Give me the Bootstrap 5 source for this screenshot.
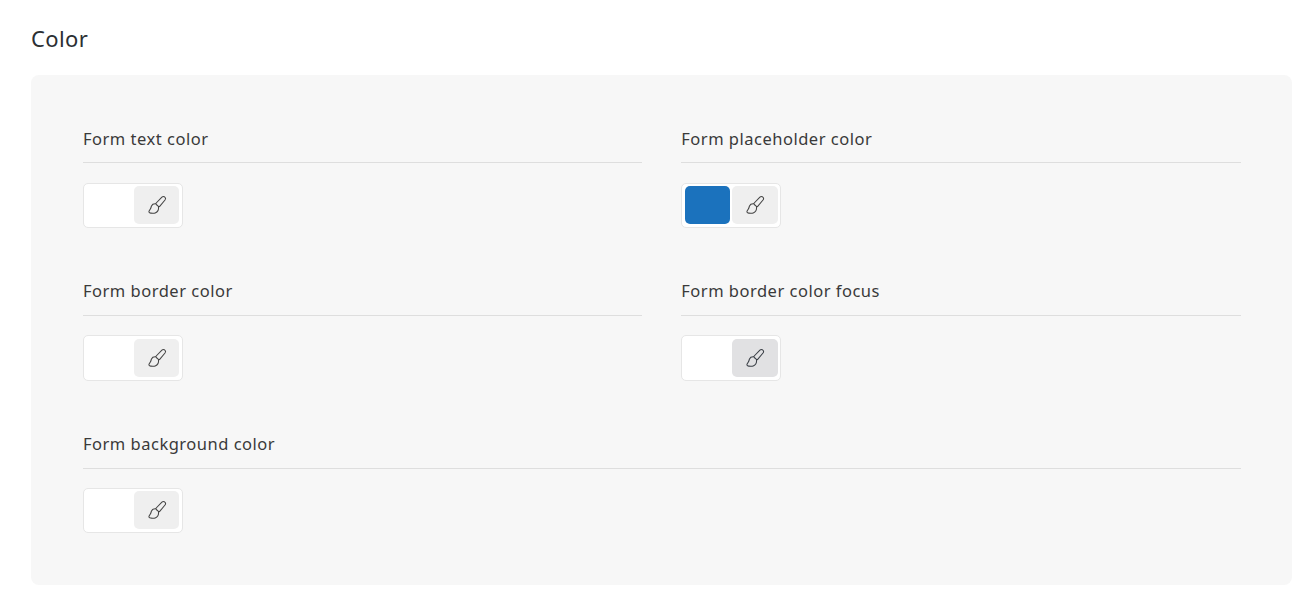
<!DOCTYPE html>
<html lang="en">
<head>
<meta charset="utf-8">
<title>Color</title>
<link href="https://cdn.jsdelivr.net/npm/bootstrap@5.3.0/dist/css/bootstrap.min.css" rel="stylesheet">
<style>
body{background:#fff;font-family:"Noto Sans",sans-serif;color:#212529;overflow:hidden}
.page-wrap{padding:23px 19px 0 31px}
.sec-title{font-size:22px;font-weight:400;line-height:30px;margin:0 0 22px;color:#2b2f33;letter-spacing:.4px}
.panel-box{background:#f7f7f7;border-radius:8px;padding:52.55px 51px 0 52px;height:510px}
.field-grid{display:grid;grid-template-columns:559.4px 559.7px;column-gap:38.9px;row-gap:0}
.field-wide{grid-column:1 / 3}
.field-item{height:152.6px}
.field-label{font-size:16.5px;font-weight:400;line-height:22.7px;letter-spacing:.5px;color:#3a3a3a;padding-bottom:12.15px;border-bottom:1px solid #dedede;margin-bottom:19.2px}
.swatch-box{width:100px;height:45.7px;background:#fff;border:1px solid #e6e6e6;border-radius:5px;padding:2.5px 2.7px 3px 3px}
.swatch-fill{width:45px;border-radius:5px}
.swatch-blue{background:#1b72bd}
.pick-btn{width:45.4px;border:0;border-radius:5px;background:#efefef;padding:0;color:#444}
.pick-active{background:#e1e1e3;color:#3a3f46}
.pick-btn svg{width:20px;height:20px;display:block}
</style>
</head>
<body>
<svg width="0" height="0" class="d-block" aria-hidden="true"><defs>
<symbol id="brush" viewBox="0 0 20 20"><path d="M14.9 2.1c.9-.9 2.200-.9 3 0 .8.800.8 2 .1 2.900L12.900 11.200c-.4.500-1 .6-1.500.2L9.300 9.500c-.5-.4-.5-1-.1-1.500zM9.100 8.900C7 8.600 5.200 9.400 4.500 11 4 12.200 4 13.200 3.200 14.300c-.5.700-1.300 1.600-1.300 2.500 0 .9.800 1.300 1.700 1.300 1.500.2 3.300.3 4.600-.2 2.200-.8 3.700-2.900 3.300-6.400" fill="none" stroke="currentColor" stroke-width="1.050" stroke-linejoin="round" stroke-linecap="round"/></symbol>
</defs></svg>
<main class="page-wrap">
<h1 class="sec-title">Color</h1>
<div class="panel-box">
<div class="field-grid">
<div class="field-item">
<div class="field-label">Form text color</div>
<div class="swatch-box d-flex justify-content-between"><div class="swatch-fill"></div><button type="button" class="pick-btn d-flex align-items-center justify-content-center" aria-label="Pick colour"><svg><use href="#brush"/></svg></button></div>
</div>
<div class="field-item">
<div class="field-label">Form placeholder color</div>
<div class="swatch-box d-flex justify-content-between"><div class="swatch-fill swatch-blue"></div><button type="button" class="pick-btn d-flex align-items-center justify-content-center" aria-label="Pick colour"><svg><use href="#brush"/></svg></button></div>
</div>
<div class="field-item">
<div class="field-label">Form border color</div>
<div class="swatch-box d-flex justify-content-between"><div class="swatch-fill"></div><button type="button" class="pick-btn d-flex align-items-center justify-content-center" aria-label="Pick colour"><svg><use href="#brush"/></svg></button></div>
</div>
<div class="field-item">
<div class="field-label">Form border color focus</div>
<div class="swatch-box d-flex justify-content-between"><div class="swatch-fill"></div><button type="button" class="pick-btn pick-active d-flex align-items-center justify-content-center" aria-label="Pick colour"><svg><use href="#brush"/></svg></button></div>
</div>
<div class="field-item field-wide">
<div class="field-label">Form background color</div>
<div class="swatch-box d-flex justify-content-between"><div class="swatch-fill"></div><button type="button" class="pick-btn d-flex align-items-center justify-content-center" aria-label="Pick colour"><svg><use href="#brush"/></svg></button></div>
</div>
</div>
</div>
</main>
<script src="https://cdn.jsdelivr.net/npm/bootstrap@5.3.0/dist/js/bootstrap.bundle.min.js"></script>
</body>
</html>
